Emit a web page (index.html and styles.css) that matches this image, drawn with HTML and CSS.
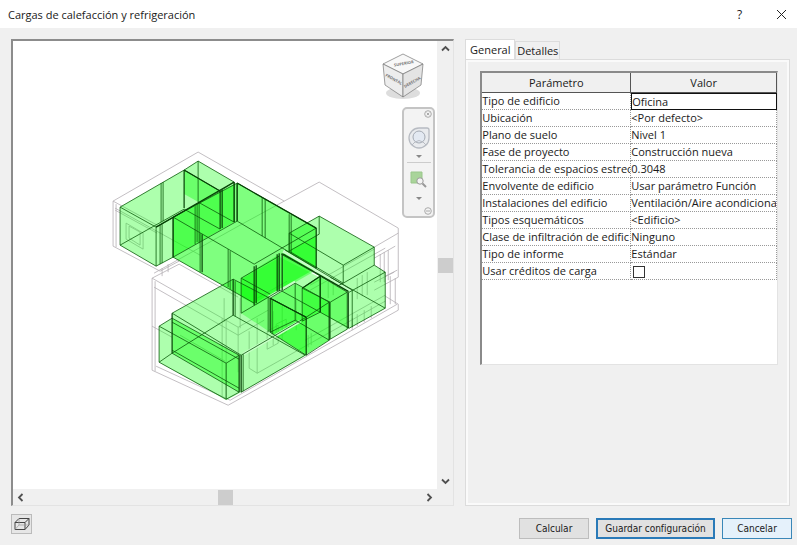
FILE: index.html
```html
<!DOCTYPE html>
<html lang="es">
<head>
    <meta charset="UTF-8">
    <meta name="viewport" content="width=device-width, initial-scale=1.0">
    <title>Cargas de calefacción y refrigeración</title>
    <link rel="stylesheet" href="styles.css">
</head>
<body>
    <div class="dialog">
        <header class="titlebar">
            <h1>Cargas de calefacción y refrigeración</h1>
            <button class="title-btn" aria-label="Ayuda">?</button>
            <button class="title-btn" aria-label="Cerrar">
                <svg width="11" height="11" viewBox="0 0 11 11"><path d="M1 1l9 9M10 1l-9 9"/></svg>
            </button>
        </header>

        <main class="content">
            <section class="preview">
                <div class="stage">
                    <svg class="model" viewBox="13 41 424 447" preserveAspectRatio="xMidYMin meet">
                        <!-- building outline -->
                        <g class="wire">
                            <path d="M113 201L198 152L284 201M113 201V246L160 271M113 201L157 225M115 208L200 255M116 204V247M115 210L157 233"/>
                            <path d="M126 223l17 10v16l-17-10zM129 226l11 6v13l-11-7z"/>
                            <path d="M240 225L319 182L398 228V277L374 290M240 225L154 273M374 247L398 233M374 258L395 246"/>
                            <path d="M152 278L179 264L238 297M152 278V370L228 405L398 310V304L385 296M155 281V371M152 278L238 327L268 310M154 287L238 335L264 320M152 326L172 337"/>
                            <path d="M156 366L230 400L397 304M160 271L179 261M162 268V276M168 264V272"/>
                            <path d="M222 318V396M226 320V398M238 327V372M249 331V368L257 373L305 346M257 318V373M219 344L241 356M180 335L225 361"/>
                            <path d="M267 331l11-6v18l-11 6zM276 324l10-5v13l-10 6z"/>
                            <path d="M257 298l30-17M310 285l64-36M310 290l75-42M328 280v18M333 277v18M357 278v21M362 275v21M367 272v23M380 254v28M384 252v30M388 250v30M374 282l20-10M385 276l12-6M390 276v28M395 278v26M352 318v12M357 314v12M364 310v12M371 306v12M305 340l80-45M305 346l80-45M308 335v12M311 333v12"/>
                            <path d="M273 311v34M282 306v34M296 300v30M224 298V322M240 298V328"/>
                        </g>

                        <!-- analytical spaces -->
                        <g class="space">
                            <path d="M120 207L184 170L220 191L173 217V257L156 266L120 245z"/>
                            <path d="M289 233L319 216L374 247V265L343 283L316 268L289 252z"/>
                            <path d="M316 268L343 283L374 265L385 272V308L349 328V292L316 274z"/>
                            <path d="M172 313L233 279L306 317V355L241 392L172 353z"/>
                            <path d="M159 326L172 318V353L241 392L226 400L159 362z"/>
                            <path d="M184 170L198 161L234 182L220 191z"/>
                            <path d="M241 279L280 257L349 292V328L330 339L305 355L270 332L241 313z"/>
                        </g>
                        <g class="space mid">
                            <path d="M173 217L237 183L316 228V268L254 303L173 257z"/>
                        </g>
                        <g class="space deep">
                            <path d="M184 170L220 191L234 182V222L173 257V217L200 203L184 194z"/>
                            <path d="M241 278L279 254V290L256 305L241 297z"/>
                            <path d="M283 253L316 236V270L283 289z"/>
                            <path d="M172 318L239 355V392L172 353z"/>
                            <path d="M270 298L295 283L329 302V340L306 354L270 332z"/>
                            <path d="M302 288L320 276V312L302 321z"/>
                            <path d="M320 276L347 292V328L320 312z"/>
                        </g>

                        <path class="gap" d="M283 251L351 290M269 297L295 282M243 354L300 321"/>

                        <g class="edge">
                            <path d="M120 207L184 170L220 191L156 227zM156 227V266L120 245V207M120 245L184 209M160 225V264M162 224V263M173 217V257L156 266"/>
                            <path d="M184 170L198 161L234 182L220 191M198 161V202M198 202L234 222V182M184 209L220 229M161 183V222M163 182V221"/>
                            <path d="M173 217L237 183L316 228L254 264zM173 257L254 303M173 257L237 221L316 268M237 183V221M200 233V272M228 249V287M230 251V289M195 206V244M197 204V242M199 203V243M262 198V236M265 199V238M289 214V252M291 215V253"/>
                            <path d="M289 233L319 216L374 247L343 265zM289 233V251L343 283V265M343 283L374 265V247M319 216V234L289 251"/>
                            <path d="M374 265L385 272L349 292M385 272V308L349 328M330 277L385 308M343 283L337 286"/>
                            <path d="M241 278L279 256M241 278V313M241 278L270 294M241 313L280 290L349 328M270 298L295 283L329 302L306 317zM270 332L295 320L329 340M295 283V320M270 332L306 355L329 340"/>
                            <path d="M302 288L320 276L347 292L330 302zM330 302V339L347 329V292M320 276V312L302 321V288M268 297V332M272 300V334M285 250L352 290M281 254L349 292M352 290V327"/>
                            <path d="M172 313L233 279L306 317L241 355zM172 353L233 315L305 355L241 392M235 281V316M243 354V391"/>
                            <path d="M159 326L172 318L239 355L226 363zM159 326V362L226 399V363M159 362L172 353L239 392L226 399M172 322L239 359M172 350L239 388"/>
                        </g>
                        <g class="edge heavy">
                            <path d="M184 170V208M184 170L220 191V229M222 190V228M234 182V222M237 184V221M156 227L234 182M202 234V272"/>
                            <path d="M173 217V257M254 266V305M256 265V303M277 254V291M279 253V291M282 253V290M316 228V268M237 183L316 228"/>
                            <path d="M233 279V315M172 313V353M239 355V392M241 355V392M270 298V332M306 317V355M329 302V340M320 276V312M302 288L320 276M348 292V328M283 254L348 291M270 298L306 317"/>
                        </g>
                    </svg>

                    <svg class="viewcube" width="46" height="52" viewBox="0 0 46 52">
                        <ellipse class="shade" cx="23" cy="41" rx="17" ry="6"/>
                        <path class="cube-top" d="M3 12L23 2L43 12L23 22z"/>
                        <path class="cube-left" d="M3 12L23 22V45L5 33z"/>
                        <path class="cube-right" d="M23 22L43 12L41 33L23 45z"/>
                        <text x="14" y="13" transform="rotate(-10 23 12)">SUPERIOR</text>
                        <text x="5" y="24" transform="rotate(29 5 24)">FRONTAL</text>
                        <text x="25" y="36" transform="rotate(-30 25 36)">DERECHA</text>
                    </svg>

                    <nav class="navbar" aria-label="Navegación">
                        <button class="nav-mini" aria-label="Cerrar barra">
                            <svg width="8" height="8" viewBox="0 0 8 8"><circle cx="4" cy="4" r="3.3"/><path d="M2.7 2.7l2.6 2.6M5.3 2.7L2.7 5.3"/></svg>
                        </button>
                        <button class="nav-tool" aria-label="Rueda de navegación">
                            <svg width="24" height="24" viewBox="0 0 24 24">
                                <path class="wheel" d="M12 2H20Q22 2 22 4V12A10 10 0 1 1 12 2z"/>
                                <circle class="hub" cx="12" cy="11" r="6"/>
                                <path class="wheel-line" d="M8 16L5 19M16 16l3 3M8 16q4-3 8 0"/>
                            </svg>
                            <svg width="6" height="4" viewBox="0 0 6 4"><path class="caret" d="M0 0h6L3 3z"/></svg>
                        </button>
                        <button class="nav-tool zoom" aria-label="Zoom de región">
                            <svg width="18" height="18" viewBox="0 0 18 18">
                                <path class="region" d="M1 1h11v11H1z"/>
                                <circle class="lens" cx="10" cy="10" r="3.2"/>
                                <path class="handle" d="M12.500 12.500L16 16"/>
                            </svg>
                            <svg width="6" height="4" viewBox="0 0 6 4"><path class="caret" d="M0 0h6L3 3z"/></svg>
                        </button>
                        <button class="nav-mini last" aria-label="Opciones de barra">
                            <svg width="8" height="8" viewBox="0 0 8 8"><circle cx="4" cy="4" r="3.3"/><path d="M2 4h4"/></svg>
                        </button>
                    </nav>
                </div>

                <div class="scroll vertical">
                    <button aria-label="Arriba"><svg width="9" height="7" viewBox="0 0 9 7"><path d="M1 5.500L4.500 2L8 5.500"/></svg></button>
                    <span class="thumb"></span>
                    <button aria-label="Abajo"><svg width="9" height="7" viewBox="0 0 9 7"><path d="M1 1.500L4.500 5L8 1.500"/></svg></button>
                </div>
                <div class="scroll horizontal">
                    <button aria-label="Izquierda"><svg width="7" height="9" viewBox="0 0 7 9"><path d="M5.500 1L2 4.500L5.500 8"/></svg></button>
                    <span class="thumb"></span>
                    <button aria-label="Derecha"><svg width="7" height="9" viewBox="0 0 7 9"><path d="M1.500 1L5 4.500L1.500 8"/></svg></button>
                </div>
            </section>

            <section class="settings">
                <div class="tabs" role="tablist">
                    <button class="tab selected" role="tab" aria-selected="true">General</button>
                    <button class="tab" role="tab" aria-selected="false">Detalles</button>
                </div>
                <div class="tab-panel" role="tabpanel">
                    <div class="grid-frame">
                        <table class="params">
                            <thead>
                                <tr><th>Parámetro</th><th>Valor</th></tr>
                            </thead>
                            <tbody>
                                <tr><td>Tipo de edificio</td><td class="focused">Oficina</td></tr>
                                <tr><td>Ubicación</td><td>&lt;Por defecto&gt;</td></tr>
                                <tr><td>Plano de suelo</td><td>Nivel 1</td></tr>
                                <tr><td>Fase de proyecto</td><td>Construcción nueva</td></tr>
                                <tr><td>Tolerancia de espacios estrec</td><td>0.3048</td></tr>
                                <tr><td>Envolvente de edificio</td><td>Usar parámetro Función</td></tr>
                                <tr><td>Instalaciones del edificio</td><td>Ventilación/Aire acondiciona</td></tr>
                                <tr><td>Tipos esquemáticos</td><td>&lt;Edificio&gt;</td></tr>
                                <tr><td>Clase de infiltración de edific</td><td>Ninguno</td></tr>
                                <tr><td>Tipo de informe</td><td>Estándar</td></tr>
                                <tr><td><label for="credits">Usar créditos de carga</label></td><td><input type="checkbox" id="credits"></td></tr>
                            </tbody>
                        </table>
                    </div>
                </div>
            </section>
        </main>

        <footer class="actions">
            <button class="view-btn" aria-label="Vista alámbrica">
                <svg width="16" height="14" viewBox="0 0 16 14">
                    <path d="M1 5.500L5 1.500H15V8L11 12.500H1zM1 5.500H11V12.500M11 5.500L15 1.500"/>
                    <path class="thin" d="M5 1.500V8H15M5 8L1 12.500"/>
                </svg>
            </button>
            <button class="btn">Calcular</button>
            <button class="btn default">Guardar configuración</button>
            <button class="btn hot">Cancelar</button>
        </footer>
    </div>
</body>
</html>
```
FILE: styles.css
```css
* {
    box-sizing: border-box;
}

body {
    margin: 0;
    font-family: "Open Sans", "Noto Sans", sans-serif;
    font-size: 11px;
    color: #1a1a1a;
    background-color: #f0f0f0;
}

button {
    font: inherit;
    color: inherit;
    padding: 0;
    border: 0;
    background: none;
}

svg {
    display: block;
    fill: none;
}

.dialog {
    display: flex;
    flex-direction: column;
    min-height: 100vh;
}

/* title bar */
.titlebar {
    display: flex;
    align-items: center;
    height: 28px;
    padding-left: 8px;
    background-color: #fff;
}

.titlebar h1 {
    flex: 1;
    margin: 0;
    font-size: 11px;
    font-weight: normal;
}

.title-btn {
    display: flex;
    align-items: center;
    justify-content: center;
    width: 43px;
    height: 28px;
    font-size: 12px;
}

.title-btn:last-child {
    width: 31px;
    margin-left: 5px;
}

.title-btn path {
    stroke: #222;
}

.content {
    flex: 1;
    display: flex;
    gap: 11px;
    padding: 11px 7px 0 11px;
}

/* 3D preview */
.preview {
    flex: 442 1 0;
    min-width: 0;
    display: grid;
    grid-template-columns: 1fr 16px;
    grid-template-rows: 1fr 16px;
    border: 1px solid #e3e3e3;
    border-top: 2px solid #8c8c8c;
    border-left: 2px solid #8c8c8c;
}

.stage {
    position: relative;
    background-color: #fff;
}

.model {
    position: absolute;
    width: 100%;
    height: 100%;
}

.wire {
    stroke: #b4aeb4;
    stroke-width: 0.8;
}

.space {
    fill: #00ff00;
    fill-opacity: 0.32;
}

.mid {
    fill-opacity: 0.5;
}

.deep {
    fill-opacity: 0.38;
}

.gap {
    stroke: #c8ffc8;
    stroke-width: 3;
}

.edge {
    stroke: #0b5a0b;
    stroke-width: 0.8;
}

.heavy {
    stroke: #064006;
    stroke-width: 1.2;
}

.viewcube {
    position: absolute;
    top: 11px;
    right: 11px;
}

.viewcube path {
    stroke: #777;
    stroke-width: 0.7;
}

.viewcube text {
    font-size: 4px;
    font-weight: bold;
    fill: #777;
}

.shade {
    fill: #ddd;
}

.cube-top {
    fill: #f8f8f8;
}

.cube-left {
    fill: #ededed;
}

.cube-right {
    fill: #e4e4e4;
}

.navbar {
    position: absolute;
    top: 66px;
    right: 2px;
    width: 33px;
    height: 111px;
    display: flex;
    flex-direction: column;
    align-items: center;
    padding: 1px;
    border: 2px solid #c4c4c4;
    border-radius: 5px;
    background-color: #f3f3f3;
}

.nav-mini {
    align-self: flex-end;
}

.nav-mini svg {
    stroke: #aaa;
}

.last {
    margin-top: auto;
}

.nav-tool {
    display: flex;
    flex-direction: column;
    align-items: center;
    gap: 5px;
    width: 24px;
    height: 43px;
    padding-top: 8px;
}

.zoom {
    gap: 8px;
    height: 46px;
    margin-top: 2px;
    border-top: 1px solid #ccc;
}

.wheel {
    fill: #e9ebee;
    stroke: #b7bbc2;
    stroke-width: 1.3;
}

.hub {
    fill: #e3e9f2;
    stroke: #a4aab4;
}

.wheel-line {
    stroke: #b7bbc2;
}

.caret {
    fill: #888;
}

.region {
    fill: #a9d49a;
    stroke: #9ac78b;
}

.lens {
    fill: #f3f3f3;
    stroke: #999;
}

.handle {
    stroke: #999;
    stroke-width: 2;
}

/* scroll bars */
.scroll {
    display: flex;
    align-items: center;
    justify-content: space-between;
    background-color: #f0f0f0;
}

.vertical {
    flex-direction: column;
}

.scroll button {
    display: flex;
    align-items: center;
    justify-content: center;
    width: 15px;
    height: 15px;
}

.scroll path {
    stroke: #505050;
    stroke-width: 1.8;
}

.thumb {
    width: 15px;
    height: 15px;
    background-color: #cdcdcd;
}

/* tabs */
.settings {
    flex: 326 1 0;
    min-width: 0;
    display: flex;
    flex-direction: column;
}

.tabs {
    display: flex;
    align-items: flex-end;
    height: 20px;
}

.tab {
    height: 18px;
    width: 45px;
    border: 1px solid #dcdcdc;
    border-bottom: 0;
}

.tab.selected {
    height: 20px;
    width: 50px;
    background-color: #fff;
}

.tab-panel {
    flex: 1;
    padding: 11px 11px 0 14px;
    border: 1px solid #dcdcdc;
    box-shadow: inset 0 0 0 2px #fafafa;
}

.grid-frame {
    height: 294px;
    border: 1px solid #e3e3e3;
    border-top: 2px solid #8a8a8a;
    border-left: 2px solid #8a8a8a;
    background-color: #fff;
}

.params {
    width: 100%;
    table-layout: fixed;
    border-collapse: separate;
    border-spacing: 0;
    line-height: 16px;
}

.params th {
    height: 20px;
    padding: 0;
    font-weight: normal;
    background-color: #f0f0f0;
    border-right: 1px solid #555;
    border-bottom: 1px solid #555;
}

.params td {
    height: 17px;
    padding: 0;
    overflow: hidden;
    white-space: nowrap;
    border-right: 1px dotted #999;
    border-bottom: 1px dotted #999;
}

.params th:first-child {
    width: 149px;
}

.params .focused {
    border: 0;
    padding-left: 1px;
    outline: 1px solid #111;
    outline-offset: -1px;
}

.params input {
    display: block;
    appearance: none;
    width: 12px;
    height: 12px;
    margin: 3px 1px 1px 2px;
    border: 1px solid #333;
    background-color: #fff;
}

/* bottom buttons */
.actions {
    display: flex;
    gap: 7px;
    padding: 8px 5px 6px 11px;
}

.view-btn {
    display: flex;
    align-items: center;
    justify-content: center;
    width: 21px;
    height: 20px;
    margin-right: auto;
    border: 1px solid #bbb;
    background-color: #e6e6e6;
}

.view-btn path {
    stroke: #444;
}

.view-btn .thin {
    stroke: #999;
    stroke-width: 0.7;
}

.btn {
    align-self: flex-end;
    width: 70px;
    height: 21px;
    margin-top: 4px;
    font-family: "DejaVu Sans Condensed", "DejaVu Sans", sans-serif;
    font-size: 10px;
    border: 1px solid #bdbdbd;
    background-color: #e1e1e1;
}

.default {
    width: 119px;
    border: 2px solid #2a7ab8;
}

.hot {
    border-color: #3a87b8;
    background-color: #e5f1fb;
}
```
